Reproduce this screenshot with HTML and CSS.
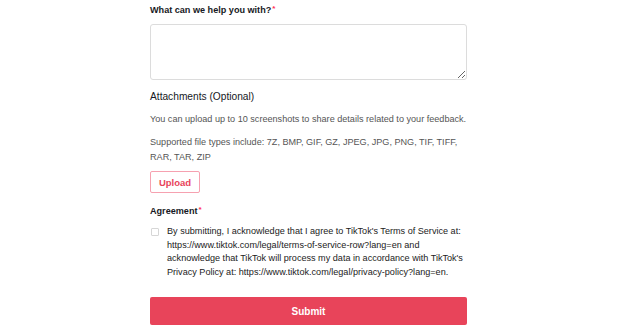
FILE: index.html
```html
<!DOCTYPE html>
<html lang="en">
<head>
    <meta charset="UTF-8">
    <meta name="viewport" content="width=device-width, initial-scale=1.0">
    <title>Feedback</title>
    <link rel="stylesheet" href="styles.css">
</head>
<body>
    <form class="feedback-form">
        <label class="field-label title-label">What can we help you with?<span class="req">*</span></label>
        <textarea class="message"></textarea>

        <h2 class="section-title">Attachments (Optional)</h2>
        <p class="hint">You can upload up to 10 screenshots to share details related to your feedback.</p>
        <p class="hint types">Supported file types include: 7Z, BMP, GIF, GZ, JPEG, JPG, PNG, TIF, TIFF, RAR, TAR, ZIP</p>
        <button type="button" class="upload-btn">Upload</button>

        <label class="field-label agree-label">Agreement<span class="req">*</span></label>
        <div class="agree-row">
            <span class="checkbox"></span>
            <p class="agree-text">By submitting, I acknowledge that I agree to TikTok's Terms of Service at: https://www.tiktok.com/legal/terms-of-service-row?lang=en and acknowledge that TikTok will process my data in accordance with TikTok's Privacy Policy at: https://www.tiktok.com/legal/privacy-policy?lang=en.</p>
        </div>

        <button type="button" class="submit-btn">Submit</button>
    </form>
</body>
</html>
```

FILE: styles.css
```css
body {
    margin: 0;
    background: #fff;
    font-family: "Liberation Sans", Arial, sans-serif;
    color: #222;
}

.feedback-form {
    width: 317px;
    margin: 0 0 0 150px;
    padding-top: 2px;
}

.field-label {
    display: block;
    font-size: 9.1px;
    font-weight: bold;
    line-height: 14px;
    color: #161823;
}

.req {
    color: #fe2c55;
    font-size: 8px;
    vertical-align: 2px;
    margin-left: 1px;
}

.message {
    display: block;
    box-sizing: border-box;
    width: 100%;
    height: 56px;
    margin-top: 7px;
    border: 1px solid #dcdcdc;
    border-radius: 3px;
    resize: vertical;
}

.section-title {
    margin: 10px 0 0;
    font-size: 10.2px;
    font-weight: normal;
    line-height: 14px;
    color: #161823;
}

.hint {
    margin: 8px 0 0;
    font-size: 9.1px;
    line-height: 14px;
    color: #555;
}

.hint.types {
    margin-top: 8.5px;
    line-height: 15px;
}

.upload-btn {
    display: block;
    box-sizing: border-box;
    width: 50px;
    height: 22px;
    margin-top: 6.5px;
    padding: 0;
    background: #fff;
    border: 1px solid #f6a1b0;
    border-radius: 2px;
    color: #e8445a;
    font-family: inherit;
    font-size: 9.5px;
    font-weight: bold;
}

.agree-label {
    margin-top: 10px;
}

.agree-row {
    display: flex;
    margin-top: 7px;
}

.checkbox {
    flex: none;
    box-sizing: border-box;
    width: 8px;
    height: 8px;
    margin: 3px 8px 0 1px;
    border: 1px solid #d6d6d6;
    border-radius: 1px;
}

.agree-text {
    margin: 0;
    font-size: 9.1px;
    line-height: 13.5px;
    color: #222;
}

.submit-btn {
    display: block;
    width: 100%;
    height: 28px;
    margin-top: 18px;
    background: #e8445a;
    border: none;
    border-radius: 2px;
    color: #fff;
    font-family: inherit;
    font-size: 10px;
    font-weight: bold;
}
```
